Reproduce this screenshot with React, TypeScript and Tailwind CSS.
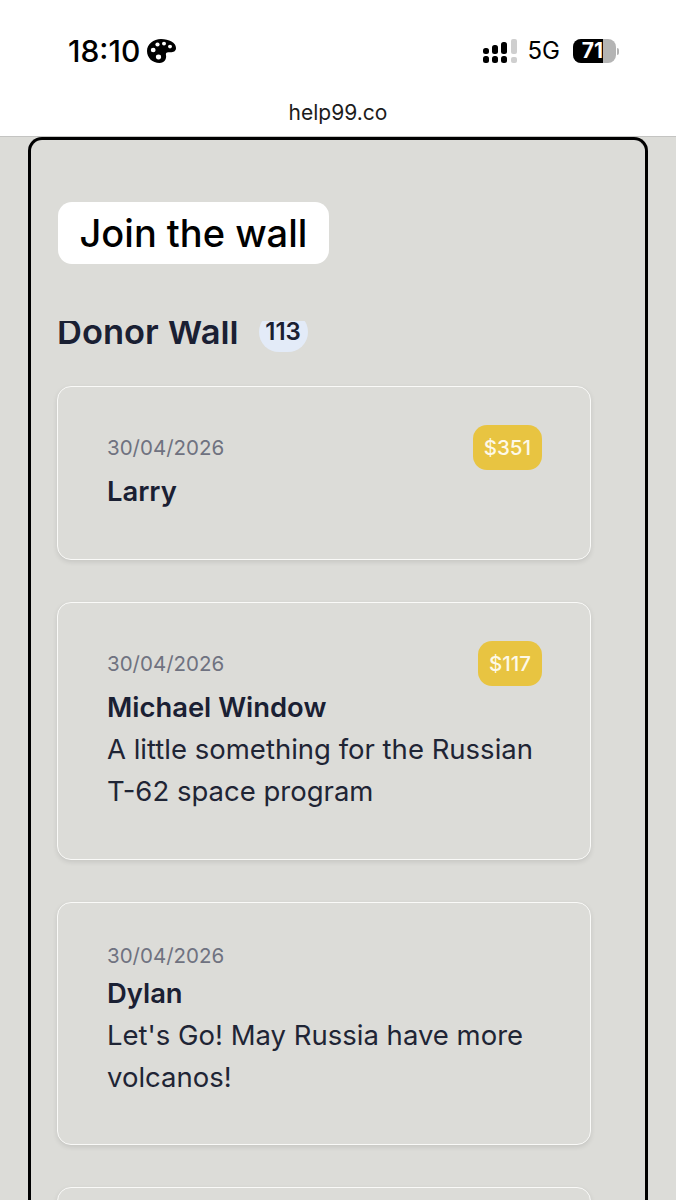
interface Donation {
  date: string;
  name: string;
  message?: string[];
  amount?: string;
  height: string;
}

const donations: Donation[] = [
  { date: "30/04/2026", name: "Larry", amount: "$351", height: "h-[174px]" },
  {
    date: "30/04/2026",
    name: "Michael Window",
    message: ["A little something for the Russian", "T-62 space program"],
    amount: "$117",
    height: "h-[258px]",
  },
  {
    date: "30/04/2026",
    name: "Dylan",
    message: ["Let's Go! May Russia have more", "volcanos!"],
    height: "h-[243px]",
  },
  { date: "", name: "", height: "h-[175px]" },
];

function PaletteIcon() {
  return (
    <svg width="29" height="24" viewBox="0 0 29 24" className="block">
      <path
        fill="#000"
        d="M14 0C22 0 29 3.5 29 9C29 13 25 13.6 22 13.2C19.5 12.9 18.5 14 19 16.2C19.8 19.5 17.5 24 12.5 24C5.5 24 0 19 0 12C0 5 6.5 0 14 0Z"
      />
      <g fill="#fff">
        <ellipse cx="6.2" cy="11" rx="2.4" ry="2.3" />
        <ellipse cx="10.5" cy="5.6" rx="2.1" ry="2" />
        <ellipse cx="17" cy="4.6" rx="2" ry="1.9" />
        <ellipse cx="23" cy="7.6" rx="2" ry="1.8" />
        <ellipse cx="11.5" cy="18" rx="2.6" ry="2.4" />
      </g>
    </svg>
  );
}

function SignalIcon() {
  return (
    <svg width="34" height="24" viewBox="0 0 34 24" className="block">
      <g fill="#000">
        <rect x="0" y="17" width="6" height="7" rx="2.5" />
        <rect x="9" y="17" width="6" height="7" rx="2.5" />
        <rect x="18" y="17" width="6" height="7" rx="2.5" />
        <rect x="0" y="9" width="6" height="6" rx="2.5" />
        <rect x="9" y="6" width="6" height="9" rx="2.5" />
        <rect x="18" y="3" width="6" height="12" rx="2.5" />
      </g>
      <g fill="#cfcfcf">
        <rect x="28" y="18" width="6" height="6" rx="2" />
        <rect x="28" y="0" width="6" height="15" rx="2" />
      </g>
    </svg>
  );
}

function Battery() {
  return (
    <div className="flex items-center">
      <div className="relative flex h-[24px] w-[43px] items-center overflow-hidden rounded-[8px] bg-[#b4b4b4]">
        <div className="flex h-full w-[30px] items-center justify-end bg-black text-[21px] font-bold text-white">
          71
        </div>
      </div>
      <div className="ml-[1px] h-[7px] w-[2px] rounded-r-full bg-[#b4b4b4]" />
    </div>
  );
}

function DonationCard({ donation }: { donation: Donation }) {
  return (
    <div
      className={`${donation.height} shrink-0 rounded-[14px] border-[1.5px] border-[#fafaf8] bg-[#dcdcd8] pt-[38px] pr-[48px] pl-[49px] shadow-[0_2px_5px_rgba(0,0,0,0.1)]`}
    >
      <div className="flex items-center justify-between">
        <div className="text-[20.5px] leading-[30px] text-[#6f7280]">{donation.date}</div>
        {donation.amount && (
          <span className="rounded-[14px] bg-[#e8c441] px-[11px] py-[8px] text-[20.5px] leading-[29px] font-medium text-[#fdf9e8]">
            {donation.amount}
          </span>
        )}
      </div>
      <div className={donation.amount ? "mt-0" : "mt-[1px]"}>
        <div className="text-[27.4px] leading-[42px] font-semibold text-[#1a2033]">{donation.name}</div>
        {donation.message?.map((line) => (
          <div key={line} className="text-[27.5px] leading-[42px] text-[#1f2535]">
            {line}
          </div>
        ))}
      </div>
    </div>
  );
}

export default function App() {
  return (
    <div className="flex h-[1200px] w-[676px] flex-col overflow-hidden bg-[#dcdcd8] font-['Inter',sans-serif]">
      <header className="h-[137px] shrink-0 border-b border-[#c4c4c2] bg-white">
        <div className="flex h-[100px] items-start justify-between pt-[32px] pr-[57px] pl-[68px]">
          <div className="flex items-center gap-[7px] text-black">
            <span className="text-[30px] leading-[38px] font-medium">18:10</span>
            <PaletteIcon />
          </div>
          <div className="flex items-center pt-[6px] text-black">
            <SignalIcon />
            <span className="mr-[13px] ml-[11px] text-[24px] leading-[26px]">5G</span>
            <Battery />
          </div>
        </div>
        <div className="text-center text-[21px] leading-[26px] text-[#1c1c1c]">help99.co</div>
      </header>

      <main className="ml-[28px] flex h-[1200px] w-[620px] shrink-0 flex-col rounded-t-[14px] border-[3px] border-b-0 border-black pt-[62px] pl-[26px]">
        <div className="ml-[1px] w-fit rounded-[14px] bg-white px-[21.5px] py-[5px] text-[38px] leading-[52px] font-medium text-black">
          Join the wall
        </div>
        {/* the heading row clips its own tops, same as the page does */}
        <div className="mt-[57px] flex h-[32px] shrink-0 items-start overflow-hidden">
          <h2 className="-mt-[6px] shrink-0 text-[34.5px] leading-[33px] font-semibold whitespace-nowrap text-[#1a2033]">
            Donor Wall
          </h2>
          <span className="mt-[-9px] ml-[20px] flex h-[40px] w-[49px] shrink-0 items-center justify-center rounded-full bg-[#e3ebf8] text-[24px] font-semibold text-[#1a2033]">
            113
          </span>
        </div>
        <div className="mt-[33px] flex w-[534px] flex-col gap-[42px]">
          {donations.map((donation, i) => (
            <DonationCard key={i} donation={donation} />
          ))}
        </div>
      </main>
    </div>
  );
}
